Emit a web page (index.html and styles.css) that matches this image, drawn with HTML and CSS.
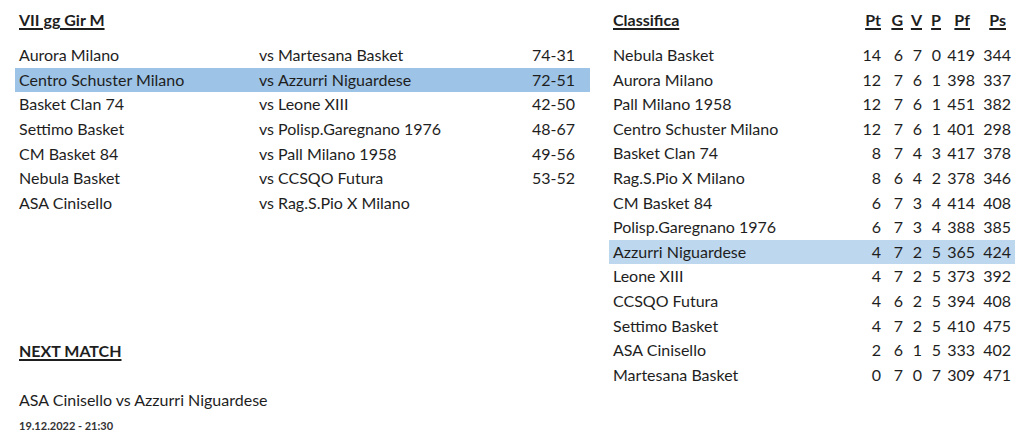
FILE: index.html
```html
<!DOCTYPE html>
<html lang="it">
<head>
<meta charset="utf-8">
<title>VII gg Gir M</title>
<link rel="stylesheet" href="styles.css">
</head>
<body>
<div class="page">
  <section class="left">
    <div class="title"><span class="u">VII gg Gir M</span></div>
    <div class="matches">
      <div class="mrow"><span>Aurora Milano</span><span>vs</span><span>Martesana Basket</span><span class="score">74-31</span></div>
      <div class="mrow hl"><span>Centro Schuster Milano</span><span>vs</span><span>Azzurri Niguardese</span><span class="score">72-51</span></div>
      <div class="mrow"><span>Basket Clan 74</span><span>vs</span><span>Leone XIII</span><span class="score">42-50</span></div>
      <div class="mrow"><span>Settimo Basket</span><span>vs</span><span>Polisp.Garegnano 1976</span><span class="score">48-67</span></div>
      <div class="mrow"><span>CM Basket 84</span><span>vs</span><span>Pall Milano 1958</span><span class="score">49-56</span></div>
      <div class="mrow"><span>Nebula Basket</span><span>vs</span><span>CCSQO Futura</span><span class="score">53-52</span></div>
      <div class="mrow"><span>ASA Cinisello</span><span>vs</span><span>Rag.S.Pio X Milano</span><span class="score"></span></div>
    </div>
    <div class="next">
      <div class="title"><span class="u">NEXT MATCH</span></div>
      <div class="next-match">ASA Cinisello vs Azzurri Niguardese</div>
      <div class="date">19.12.2022 - 21:30</div>
    </div>
  </section>
  <section class="right">
    <div class="srow head">
      <span class="name"><span class="u">Classifica</span></span>
      <span class="n"><span class="u">Pt</span></span>
      <span class="n"><span class="u">G</span></span>
      <span class="n"><span class="u">V</span></span>
      <span class="n"><span class="u">P</span></span>
      <span class="n pf"><span class="u">Pf</span></span>
      <span class="n ps"><span class="u">Ps</span></span>
    </div>
    <div class="table">
      <div class="srow"><span class="name">Nebula Basket</span><span class="n">14</span><span class="n">6</span><span class="n">7</span><span class="n">0</span><span class="n">419</span><span class="n">344</span></div>
      <div class="srow"><span class="name">Aurora Milano</span><span class="n">12</span><span class="n">7</span><span class="n">6</span><span class="n">1</span><span class="n">398</span><span class="n">337</span></div>
      <div class="srow"><span class="name">Pall Milano 1958</span><span class="n">12</span><span class="n">7</span><span class="n">6</span><span class="n">1</span><span class="n">451</span><span class="n">382</span></div>
      <div class="srow"><span class="name">Centro Schuster Milano</span><span class="n">12</span><span class="n">7</span><span class="n">6</span><span class="n">1</span><span class="n">401</span><span class="n">298</span></div>
      <div class="srow"><span class="name">Basket Clan 74</span><span class="n">8</span><span class="n">7</span><span class="n">4</span><span class="n">3</span><span class="n">417</span><span class="n">378</span></div>
      <div class="srow"><span class="name">Rag.S.Pio X Milano</span><span class="n">8</span><span class="n">6</span><span class="n">4</span><span class="n">2</span><span class="n">378</span><span class="n">346</span></div>
      <div class="srow"><span class="name">CM Basket 84</span><span class="n">6</span><span class="n">7</span><span class="n">3</span><span class="n">4</span><span class="n">414</span><span class="n">408</span></div>
      <div class="srow"><span class="name">Polisp.Garegnano 1976</span><span class="n">6</span><span class="n">7</span><span class="n">3</span><span class="n">4</span><span class="n">388</span><span class="n">385</span></div>
      <div class="srow hl2"><span class="name">Azzurri Niguardese</span><span class="n">4</span><span class="n">7</span><span class="n">2</span><span class="n">5</span><span class="n">365</span><span class="n">424</span></div>
      <div class="srow"><span class="name">Leone XIII</span><span class="n">4</span><span class="n">7</span><span class="n">2</span><span class="n">5</span><span class="n">373</span><span class="n">392</span></div>
      <div class="srow"><span class="name">CCSQO Futura</span><span class="n">4</span><span class="n">6</span><span class="n">2</span><span class="n">5</span><span class="n">394</span><span class="n">408</span></div>
      <div class="srow"><span class="name">Settimo Basket</span><span class="n">4</span><span class="n">7</span><span class="n">2</span><span class="n">5</span><span class="n">410</span><span class="n">475</span></div>
      <div class="srow"><span class="name">ASA Cinisello</span><span class="n">2</span><span class="n">6</span><span class="n">1</span><span class="n">5</span><span class="n">333</span><span class="n">402</span></div>
      <div class="srow"><span class="name">Martesana Basket</span><span class="n">0</span><span class="n">7</span><span class="n">0</span><span class="n">7</span><span class="n">309</span><span class="n">471</span></div>
    </div>
  </section>
</div>
</body>
</html>
```

FILE: styles.css
```css
html, body {
  margin: 0;
  padding: 0;
  background: #ffffff;
}
body {
  font-family: Lato, "Open Sans", "Liberation Sans", sans-serif;
  font-size: 16px;
  color: #1e1e1e;
}
.page {
  display: flex;
  width: 1024px;
  height: 444px;
  padding-top: 8px;
  box-sizing: border-box;
}
.left {
  width: 575px;
  margin-left: 15px;
  display: flex;
  flex-direction: column;
}
.right {
  width: 406px;
  margin-left: 19px;
}
.title {
  height: 24.7px;
  line-height: 24.7px;
  padding-left: 4px;
  font-weight: 700;
}
.u {
  text-decoration: underline;
  text-decoration-thickness: 1.5px;
  text-underline-offset: 2px;
}
.matches {
  margin-top: 10.3px;
}
.mrow {
  display: grid;
  grid-template-columns: 240px 19px 1fr auto;
  height: 24.7px;
  line-height: 24.7px;
  padding: 0 15px 0 4px;
}
.mrow.hl {
  background: #9dc3e6;
}
.score {
  text-align: right;
}
.next {
  margin-top: 123px;
}
.next-match {
  margin-top: 25px;
  padding-left: 4px;
  line-height: 24px;
}
.date {
  padding-left: 4px;
  font-size: 11px;
  font-weight: 700;
  color: #333;
  line-height: 16px;
  margin-top: 6px;
}
.table {
  margin-top: 10.3px;
}
.srow {
  display: grid;
  grid-template-columns: 232px 36px 22px 19px 19px 34px 36px;
  height: 24.6px;
  line-height: 24.6px;
  padding-left: 4px;
}
.srow.head {
  font-weight: 700;
  height: 24.7px;
  line-height: 24.7px;
}
.srow.hl2 {
  background: #bdd7ee;
}
.n {
  text-align: right;
}
.head .pf {
  padding-right: 5px;
}
.head .ps {
  padding-right: 5px;
}
```
